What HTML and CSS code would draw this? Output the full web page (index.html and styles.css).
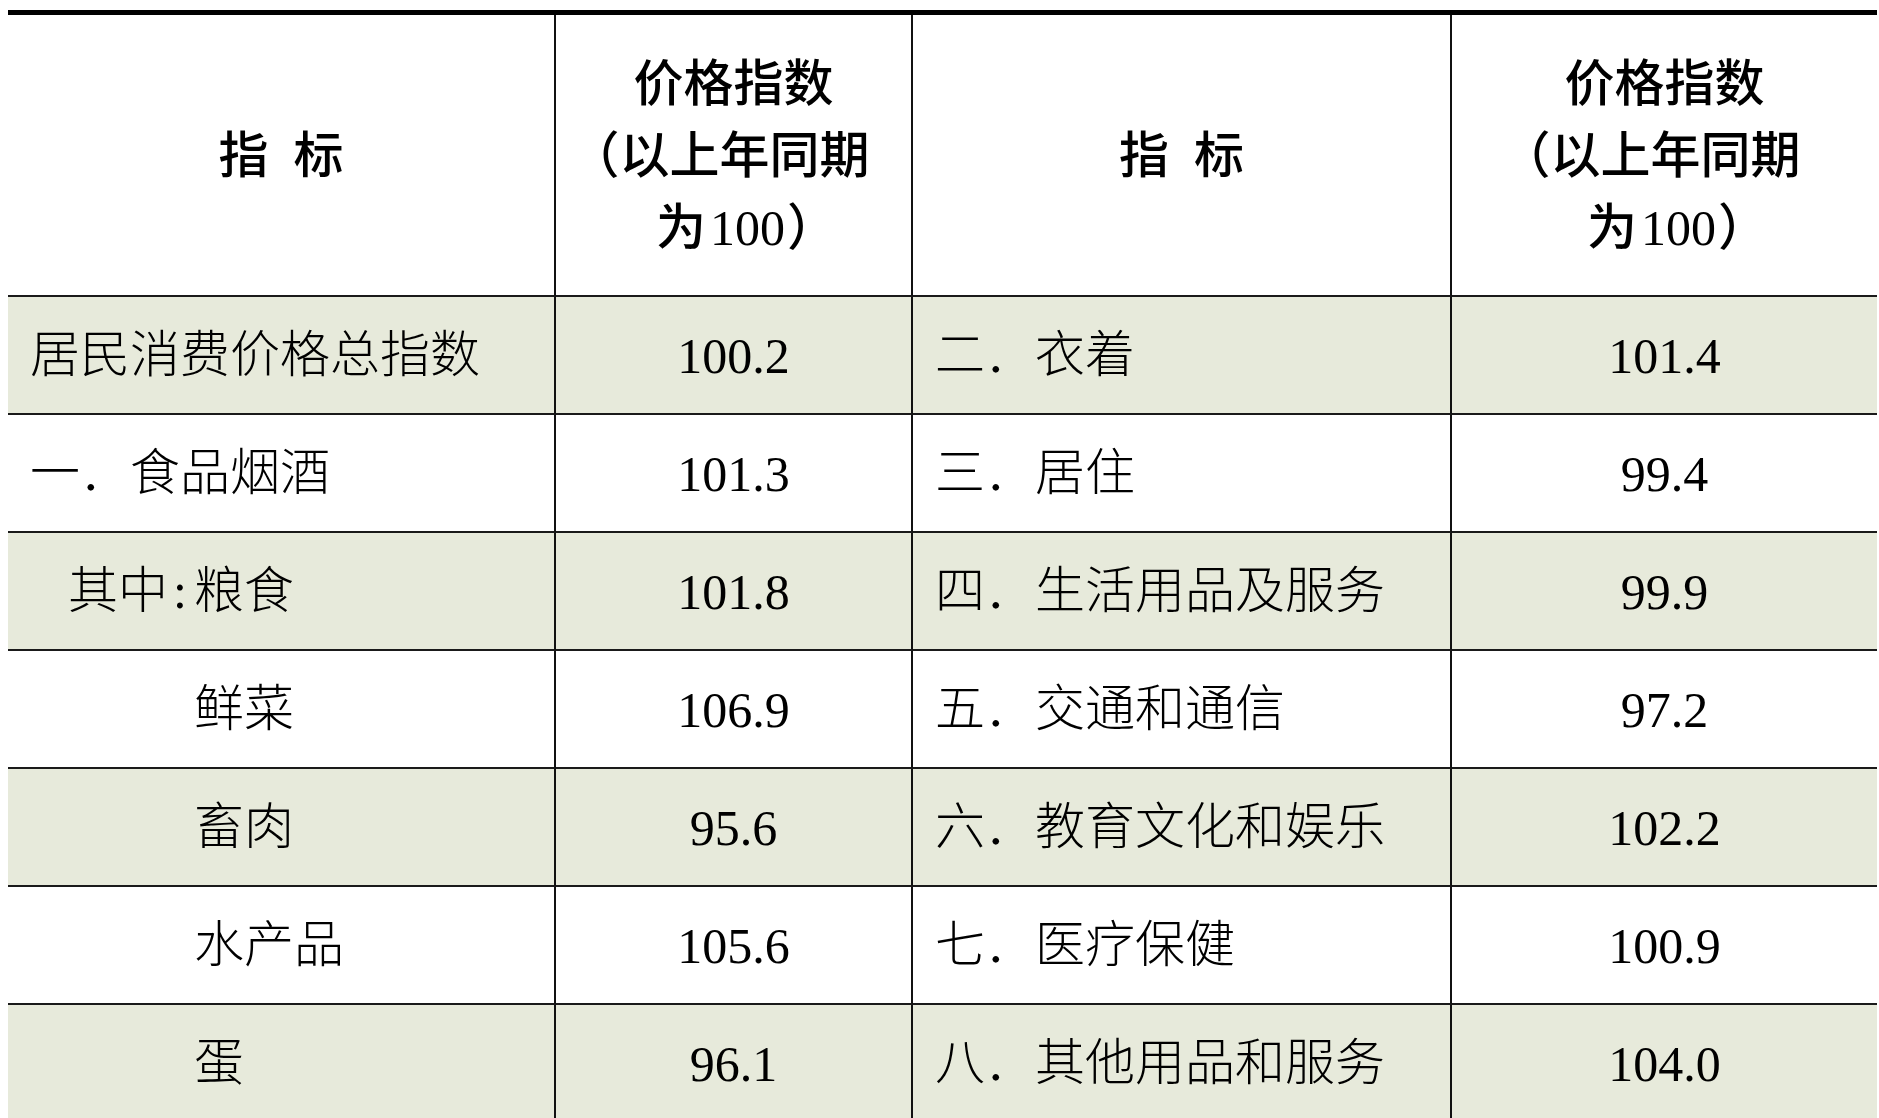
FILE: index.html
```html
<!DOCTYPE html>
<html lang="zh-CN">
<head>
<meta charset="utf-8">
<title>居民消费价格指数</title>
<link rel="stylesheet" href="styles.css">
</head>
<body>
<div class="sheet">
  <div class="grid">
    <div class="cell head c1"><span class="h">指&ensp;标</span></div>
    <div class="cell head c2"><span class="h"><span class="ln">价格指数</span><span class="ln l2">（以上年同期</span><span class="ln l3">为<span class="num">100</span>）</span></span></div>
    <div class="cell head c3"><span class="h">指&ensp;标</span></div>
    <div class="cell head c4"><span class="h"><span class="ln">价格指数</span><span class="ln l2">（以上年同期</span><span class="ln l3">为<span class="num">100</span>）</span></span></div>

    <div class="cell name shade">居民消费价格总指数</div>
    <div class="cell val shade">100.2</div>
    <div class="cell name shade">二．衣着</div>
    <div class="cell val shade last">101.4</div>

    <div class="cell name">一．食品烟酒</div>
    <div class="cell val">101.3</div>
    <div class="cell name">三．居住</div>
    <div class="cell val last">99.4</div>

    <div class="cell name sub shade">其中<span class="colon">:</span>粮食</div>
    <div class="cell val shade">101.8</div>
    <div class="cell name shade">四．生活用品及服务</div>
    <div class="cell val shade last">99.9</div>

    <div class="cell name item">鲜菜</div>
    <div class="cell val">106.9</div>
    <div class="cell name">五．交通和通信</div>
    <div class="cell val last">97.2</div>

    <div class="cell name item shade">畜肉</div>
    <div class="cell val shade">95.6</div>
    <div class="cell name shade">六．教育文化和娱乐</div>
    <div class="cell val shade last">102.2</div>

    <div class="cell name item">水产品</div>
    <div class="cell val">105.6</div>
    <div class="cell name">七．医疗保健</div>
    <div class="cell val last">100.9</div>

    <div class="cell name item shade">蛋</div>
    <div class="cell val shade">96.1</div>
    <div class="cell name shade">八．其他用品和服务</div>
    <div class="cell val shade last">104.0</div>
  </div>
</div>
</body>
</html>
```

FILE: styles.css
```css
html, body {
  margin: 0;
  padding: 0;
  background: #ffffff;
}

body {
  font-family: "Liberation Serif", "Noto Sans CJK SC", serif;
  color: #000000;
}

.sheet {
  padding: 10px 2px 0 8px;
}

.grid {
  display: grid;
  width: 1869px;
  grid-template-columns: 548px 357px 539px 425px;
  grid-template-rows: 282px repeat(7, 118px);
  border-top: 5px solid #000000;
}

.cell {
  box-sizing: border-box;
  border-right: 2px solid #111111;
  border-bottom: 2px solid #1a1a1a;
  display: flex;
  align-items: center;
  font-size: 50px;
  line-height: 1;
}

.cell.c4,
.cell.last {
  border-right: none;
}

.head {
  justify-content: center;
  text-align: center;
}

.h {
  display: flex;
  flex-direction: column;
  align-items: center;
  font-family: "Liberation Serif", "Noto Sans CJK SC", sans-serif;
  font-weight: 500;
  line-height: 72px;
  padding-top: 2px;
}

.ln {
  display: block;
  white-space: nowrap;
}

.ln.l2 {
  padding-right: 28px;
}

.ln.l3 {
  padding-left: 26px;
}

.num {
  font-family: "Liberation Serif", serif;
  font-weight: 400;
  padding: 0 2px 0 4px;
}

.shade {
  background: #e7eadb;
}

.name {
  padding-left: 22px;
  font-weight: 300;
}

.name.sub {
  padding-left: 60px;
}

.name.item {
  padding-left: 186px;
}

.colon {
  padding: 0 7px 0 5px;
}

.val {
  justify-content: center;
  padding-top: 2px;
}
```
